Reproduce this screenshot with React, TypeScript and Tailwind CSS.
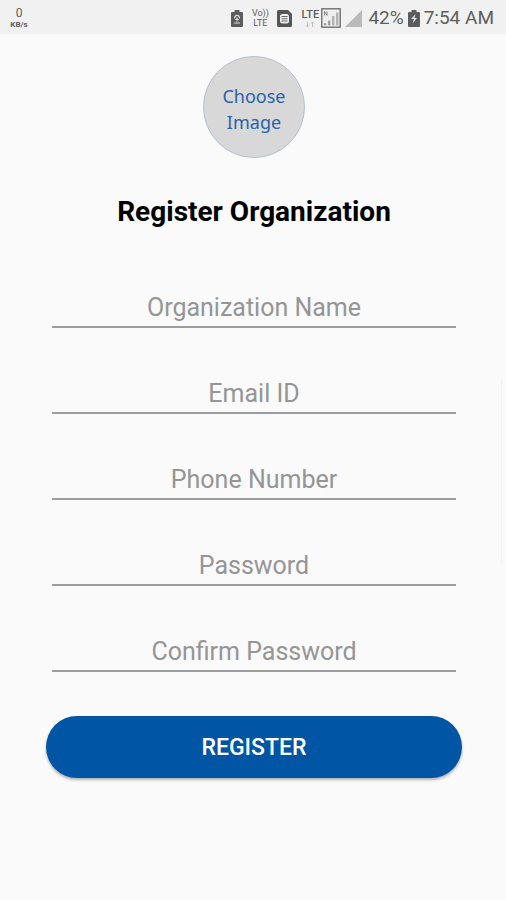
import { useState } from "react";

const fields = [
  { id: "orgName", label: "Organization Name", type: "text" },
  { id: "email", label: "Email ID", type: "email" },
  { id: "phone", label: "Phone Number", type: "tel" },
  { id: "password", label: "Password", type: "password" },
  { id: "confirmPassword", label: "Confirm Password", type: "password" },
];

function SaverIcon() {
  return (
    <svg width="12" height="17" viewBox="0 0 12 17" aria-hidden="true">
      <path d="M3.500 0h5v2H11a1 1 0 0 1 1 1v13a1 1 0 0 1-1 1H1a1 1 0 0 1-1-1V3a1 1 0 0 1 1-1h2.500z" fill="#5c5c5c" />
      <path d="M3.800 8.500a2.400 2.400 0 1 1 4.600 0M6 7.500v4M4.300 9.500h3.400M3 13h6" fill="none" stroke="#dedede" strokeWidth="1.200" />
    </svg>
  );
}

function SimIcon() {
  return (
    <svg width="15" height="17" viewBox="0 0 15 17" aria-hidden="true">
      <path d="M1.500 0H11l4 4v11.500a1.500 1.500 0 0 1-1.500 1.500h-12A1.500 1.500 0 0 1 0 15.500v-14A1.500 1.500 0 0 1 1.500 0z" fill="#555" />
      <rect x="3" y="4" width="9" height="9.500" rx="2.500" fill="#f0f0f0" />
      <path d="M4.500 6.500h6M4.500 8.800h6M4.500 11h6" stroke="#666" strokeWidth="1.100" />
    </svg>
  );
}

function SimSignalIcon() {
  return (
    <svg width="20" height="20" viewBox="0 0 20 20" aria-hidden="true">
      <rect x="0.800" y="0.800" width="18.400" height="18.400" fill="#eee" stroke="#666" strokeWidth="1.300" />
      <path d="M3 17.500v-2h2.500v2zM7 17.500v-5h2.500v5zM11 17.500V8h2.500v9.500zM15 17.500V4.500h2.500v13z" fill="#b3b3b3" />
      <path d="M3.500 7.500v-4l2.500 4v-4M4 17v-2M8 17v-4" fill="none" stroke="#8a8a8a" strokeWidth="1" />
    </svg>
  );
}

function SignalIcon() {
  return (
    <svg width="17" height="17" viewBox="0 0 17 17" aria-hidden="true">
      <path d="M17 0v17H0z" fill="#bababa" />
    </svg>
  );
}

function ChargingIcon() {
  return (
    <svg width="12" height="17" viewBox="0 0 12 17" aria-hidden="true">
      <path d="M3.500 0h5v2H11a1 1 0 0 1 1 1v13a1 1 0 0 1-1 1H1a1 1 0 0 1-1-1V3a1 1 0 0 1 1-1h2.500z" fill="#5c5c5c" />
      <path d="M7.500 4 3 9h3l-1.500 4.500L9 8H6.500z" fill="#dedede" />
    </svg>
  );
}

function StatusBar() {
  return (
    <header className="flex h-[34px] items-center justify-between bg-[#f1f1f1] pl-2 pr-3 pt-0.5 text-[#5e5e5e]">
      <div className="flex w-[22px] flex-col items-center">
        <span className="text-[12px] leading-[14px]">0</span>
        <span className="text-[8px] font-bold leading-[10px]">KB/s</span>
      </div>
      <div className="flex items-center">
        <SaverIcon />
        <div className="ml-2 flex w-[18px] flex-col items-center text-[9px] leading-[10px]">
          <span>Vo))</span>
          <span>LTE</span>
        </div>
        <div className="ml-2">
          <SimIcon />
        </div>
        <div className="ml-2 flex w-5 flex-col items-center">
          <span className="text-[11px] font-medium leading-[11px]">LTE</span>
          <svg width="10" height="7" viewBox="0 0 10 7" className="mt-px" aria-hidden="true">
            <path d="M2.500 1v5M1 4.500l1.500 1.500L4 4.500M7.500 6V1M6 2.500 7.500 1 9 2.500" fill="none" stroke="#bbb" />
          </svg>
        </div>
        <div className="ml-px">
          <SimSignalIcon />
        </div>
        <div className="ml-1">
          <SignalIcon />
        </div>
        <span className="ml-1.5 text-[19px] leading-6">42%</span>
        <div className="ml-1">
          <ChargingIcon />
        </div>
        <span className="ml-1 text-[19px] leading-6">7:54 AM</span>
      </div>
    </header>
  );
}

export default function App() {
  const [values, setValues] = useState<Record<string, string>>({});

  return (
    <div className="relative min-h-screen bg-[#fafafa] font-['Roboto',sans-serif]">
      <StatusBar />

      <main className="flex flex-col items-center pb-10 pl-[46px] pr-11 pt-[22px]">
        <button
          type="button"
          className="size-[102px] rounded-full border border-[#b4c0d0] bg-[#d8d8d8] pt-1 font-['Noto_Sans',sans-serif] text-[18px] leading-[26px] text-[#2a62ac]"
        >
          Choose
          <br />
          Image
        </button>

        <h1 className="mt-9 text-[28px] font-bold leading-9 text-black">Register Organization</h1>

        <form className="mt-10 w-full" onSubmit={(e) => e.preventDefault()}>
          <div className="flex flex-col gap-7 px-1.5">
            {fields.map((field) => (
              <input
                key={field.id}
                id={field.id}
                type={field.type}
                aria-label={field.label}
                placeholder={field.label}
                value={values[field.id] ?? ""}
                onChange={(e) => setValues({ ...values, [field.id]: e.target.value })}
                className="h-[58px] w-full border-b-2 border-[#9c9c9c] bg-transparent pt-[18px] text-center text-[25px] text-black outline-none placeholder:text-[#959595]"
              />
            ))}
          </div>

          <button
            type="submit"
            className="mt-11 h-[62px] w-full rounded-full bg-[#0055a5] pt-0.5 text-[23px] font-medium text-white shadow-[0_2px_3px_rgba(0,0,0,0.3)]"
          >
            REGISTER
          </button>
        </form>
      </main>

      {/* Scroll indicator */}
      <div className="absolute right-1 top-[379px] h-[184px] w-px bg-[#f3f3f3]" />
    </div>
  );
}
